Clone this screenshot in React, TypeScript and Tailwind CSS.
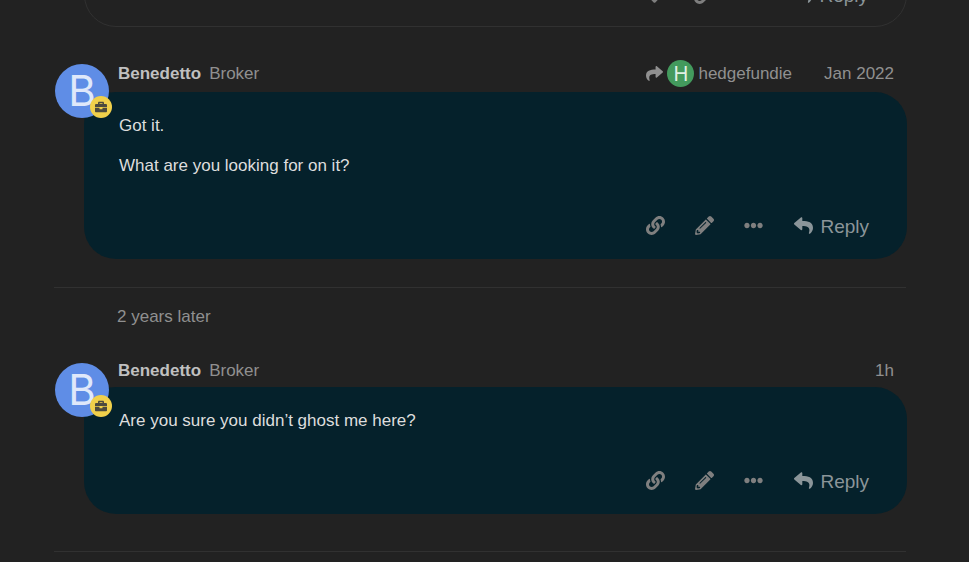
import type { ReactNode } from "react";
import {
  FaBriefcase,
  FaEllipsisH,
  FaHeart,
  FaLink,
  FaPencilAlt,
  FaReply,
  FaShare,
} from "react-icons/fa";

function PostActions({ own = false }: { own?: boolean }) {
  return (
    <div className="flex h-10 items-center justify-end pr-[38px] text-[19px] text-[#7f7f7f] [&_svg]:mb-1">
      {!own && (
        <button type="button" aria-label="Like post" className="flex h-10 w-[49px] items-center justify-center">
          <FaHeart />
        </button>
      )}
      <button type="button" aria-label="Copy link" className="flex h-10 w-[49px] items-center justify-center">
        <FaLink />
      </button>
      {own && (
        <button type="button" aria-label="Edit post" className="flex h-10 w-[49px] items-center justify-center">
          <FaPencilAlt />
        </button>
      )}
      <button type="button" aria-label="Show more" className="flex h-10 w-[49px] items-center justify-center">
        <FaEllipsisH />
      </button>
      <button type="button" className="ml-4 flex h-10 items-center gap-[7px] text-[#8b9599]">
        <FaReply />
        <span>Reply</span>
      </button>
    </div>
  );
}

function Avatar() {
  return (
    <a
      href="#benedetto"
      aria-label="Benedetto"
      className="absolute top-1 left-px flex size-[54px] items-center justify-center rounded-full bg-[#5f8de6] font-['Inter',sans-serif] text-[42px] leading-none text-[#dfe8fa]"
    >
      B
      <span className="absolute -right-[3px] bottom-0 flex size-[22px] items-center justify-center rounded-full bg-[#f1d04b] text-[12px] text-[#4d4a3e]">
        <FaBriefcase />
      </span>
    </a>
  );
}

type PostProps = {
  date: string;
  replyTo?: string;
  children: ReactNode;
};

function Post({ date, replyTo, children }: PostProps) {
  return (
    <article className="relative">
      <header className="mb-[5px] flex min-h-[23px] items-center pr-[13px] pl-16 leading-5 text-[#909090]">
        <a href="#benedetto" className="font-bold text-[#c0c0c0]">
          Benedetto
        </a>
        <span className="ml-2">Broker</span>
        <div className="ml-auto flex items-center">
          {replyTo && (
            <a href="#reply-to" className="mr-8 flex items-center gap-1">
              <FaShare />
              <span className="flex size-[27px] items-center justify-center rounded-full bg-[#439a5d] font-['Inter',sans-serif] text-[20px] text-[#e0f0e4]">
                H
              </span>
              {replyTo}
            </a>
          )}
          <a href="#post-date">{date}</a>
        </div>
      </header>
      <div className="ml-[30px] rounded-[32px] bg-[#05212b] pt-[22px] pb-3">
        <div className="mb-[29px] flex flex-col gap-4 pr-[38px] pl-[35px] leading-6 text-[#dddddd]">
          {children}
        </div>
        <PostActions own />
      </div>
      <Avatar />
    </article>
  );
}

function App() {
  return (
    <main className="min-h-screen overflow-hidden bg-[#222222] pr-[62px] pl-[54px] font-['Liberation_Sans',Arial,sans-serif] text-[17px]">
      {/* tail of the previous post */}
      <div className="mb-[33px] flex h-[27px] flex-col justify-end">
        <div className="ml-[30px] rounded-[32px] border border-[#313131] pt-[50px] pb-[10px]">
          <PostActions />
        </div>
      </div>

      <Post date="Jan 2022" replyTo="hedgefundie">
        <p>Got it.</p>
        <p>What are you looking for on it?</p>
      </Post>

      <div className="mt-7 mr-px mb-[30px] border-t border-[#313131] pt-[17px] pl-[63px] leading-6 text-[#909090]">
        2 years later
      </div>

      <Post date="1h">
        <p>Are you sure you didn’t ghost me here?</p>
      </Post>

      <hr className="mt-[37px] mr-px border-[#313131]" />
    </main>
  );
}

export default App;
